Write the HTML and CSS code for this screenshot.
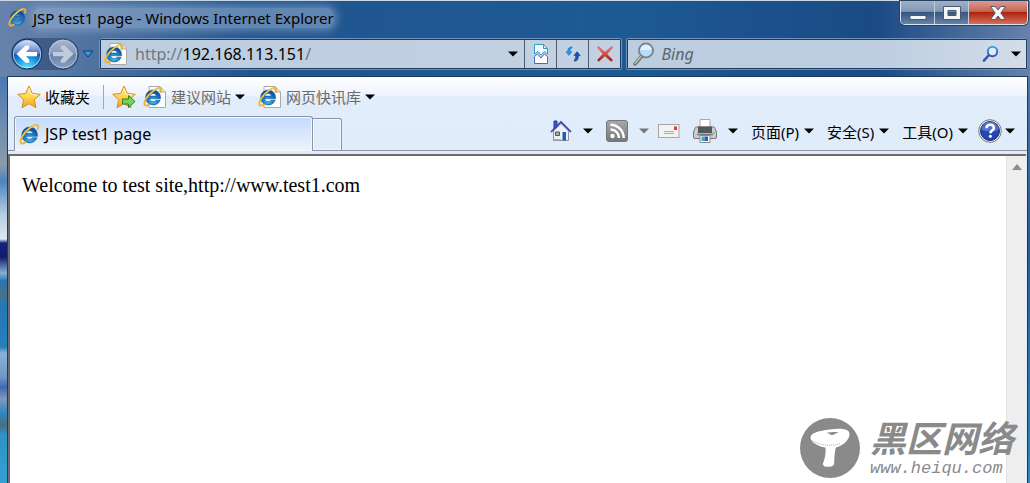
FILE: index.html
```html
<!DOCTYPE html>
<html lang="zh-CN">
<head>
  <meta charset="UTF-8" />
  <title>JSP test1 page - Windows Internet Explorer</title>
  <meta name="viewport" content="width=device-width, initial-scale=1.0">
  <link rel="stylesheet" href="styles.css">
</head>
<body>

<!-- Shared icons -->
<svg class="defs" aria-hidden="true">
  <defs>
    <radialGradient id="ie-blue" cx="50%" cy="75%" r="70%">
      <stop offset="0" stop-color="#4cc4f4"/><stop offset="0.5" stop-color="#1b7cc8"/><stop offset="1" stop-color="#0b4a94"/>
    </radialGradient>
    <linearGradient id="gold" x1="0" y1="0" x2="0" y2="1">
      <stop offset="0" stop-color="#fff3a0"/><stop offset="0.5" stop-color="#ffd44e"/><stop offset="1" stop-color="#f0a022"/>
    </linearGradient>
    <linearGradient id="lens" x1="0" y1="0" x2="0" y2="1">
      <stop offset="0" stop-color="#3aa4d8"/><stop offset="1" stop-color="#3a4fae"/>
    </linearGradient>
    <linearGradient id="red" x1="0" y1="0" x2="0" y2="1">
      <stop offset="0" stop-color="#f08078"/><stop offset="0.5" stop-color="#d84a48"/><stop offset="1" stop-color="#8a1010"/>
    </linearGradient>
    <linearGradient id="grey" x1="0" y1="0" x2="0" y2="1">
      <stop offset="0" stop-color="#a8a8a8"/><stop offset="1" stop-color="#777"/>
    </linearGradient>
    <radialGradient id="back-fill" cx="50%" cy="100%" r="75%">
      <stop offset="0" stop-color="#5ff2ff"/><stop offset="0.5" stop-color="#209ae0"/><stop offset="1" stop-color="#0b3488"/>
    </radialGradient>
    <linearGradient id="gloss" x1="0" y1="0" x2="0" y2="1">
      <stop offset="0" stop-color="#d4e2fa"/><stop offset="1" stop-color="#4468bc"/>
    </linearGradient>
    <linearGradient id="forward-fill" x1="0" y1="0" x2="0" y2="1">
      <stop offset="0" stop-color="#aab8d0"/><stop offset="0.5" stop-color="#8497b8"/><stop offset="0.52" stop-color="#6a80a8"/><stop offset="1" stop-color="#8ba0c2"/>
    </linearGradient>
  </defs>
  <symbol id="ie" viewBox="0 0 22 22">
    <path d="M11.200 3.200a8.300 8.300 0 1 0 7.700 11.300h-4.800c-.7 1-1.700 1.500-3 1.500-2.100 0-3.500-1.200-3.700-3.100h11.900c.4-5.700-3.100-9.700-8.100-9.700zm-3.700 6.800c.4-1.800 1.700-2.900 3.600-2.900s3.200 1.100 3.600 2.900z" fill="url(#ie-blue)" stroke="#0d4f98" stroke-width=".6"/>
    <path d="M19.500 5.500c1-2.400.8-4-.6-4.300-3.500-.8-11 4.600-15 11-2.300 3.700-3.100 7-1.500 8 .9.600 2.500.1 4.300-1" fill="none" stroke="#eeb526" stroke-width="2" stroke-linecap="round"/>
    <path d="M17.500 1.600C13 2.600 7.500 7 4.500 11.600" fill="none" stroke="#ffe88a" stroke-width=".7"/>
  </symbol>
  <symbol id="ie-page" viewBox="0 0 24 24">
    <path d="M6 1.500h11l5.500 5.500v15.500H6z" fill="#fdfdfd" stroke="#a9a9a9"/>
    <path d="M17 1.500V7h5.500" fill="#e6e6e6" stroke="#a9a9a9"/>
    <use href="#ie" x="0" y="2" width="20" height="20"/>
  </symbol>
  <symbol id="star" viewBox="0 0 24 24">
    <path d="M12 1l3.300 7.400 8 .9-6 5.400 1.700 8L12 18.700 5 22.700l1.700-8-6-5.400 8-.9z" fill="url(#gold)" stroke="#d68f22" stroke-linejoin="round"/>
    <path d="M12 3.500l2.300 5.800 5.500.7" fill="none" stroke="#fff9d0"/>
  </symbol>
  <symbol id="caret" viewBox="0 0 10 6"><path d="M0 .5h10L5 5.500z" fill="currentColor"/></symbol>
</svg>

<div class="window">

  <header class="titlebar">
    <svg class="icon-title"><use href="#ie"/></svg>
    <h1 class="title"><span>JSP test1 page - Windows Internet Explorer</span></h1>
    <div class="window-buttons">
      <button class="win-btn win-min" aria-label="最小化">
        <svg width="18" height="16" viewBox="0 0 18 16"><path d="M1 10.500h16v4H1z" fill="#f4f4f4" stroke="#4d5870"/></svg>
      </button>
      <button class="win-btn win-max" aria-label="最大化">
        <svg width="18" height="16" viewBox="0 0 18 16"><path d="M.5 1.500h17v13H.5z M5 5.500v5h8v-5z" fill="#f4f4f4" fill-rule="evenodd" stroke="#4d5870"/></svg>
      </button>
      <button class="win-btn win-close" aria-label="关闭">
        <svg width="18" height="16" viewBox="0 0 18 16"><path d="M1.500 1.500h4.700L9 5l2.800-3.500h4.700L11.800 8l4.700 6.500h-4.700L9 11l-2.800 3.500H1.500L6.200 8z" fill="#f6f6f6" stroke="#555d70"/></svg>
      </button>
    </div>
  </header>

  <div class="navbar">
    <div class="orbs">
      <button class="orb" aria-label="后退">
        <svg width="32" height="32" viewBox="0 0 32 32">
          <circle cx="16" cy="16" r="15" fill="url(#back-fill)" stroke="#16305c"/>
          <path d="M2.500 16a13.500 13.500 0 0 1 27 0q-13.500 3-27 0z" fill="url(#gloss)"/>
          <circle cx="16" cy="16" r="13.800" fill="none" stroke="#d6e6f8" stroke-opacity=".8"/>
          <path d="M5.500 16l9-8.500h3.700v3L15 14h11v4.200H15l3.200 3.500v3h-3.700z" fill="#fff"/>
        </svg>
      </button>
      <button class="orb" aria-label="前进">
        <svg width="32" height="32" viewBox="0 0 32 32">
          <circle cx="16" cy="16" r="15" fill="url(#forward-fill)" stroke="#2d4878"/>
          <circle cx="16" cy="16" r="13.800" fill="none" stroke="#c3d0e4" stroke-opacity=".8"/>
          <path d="M26.500 16l-9-8.500h-3.700v3L17 14H6v4.200h11l-3.200 3.500v3h3.700z" fill="#c0cbdd"/>
        </svg>
      </button>
    </div>
    <button class="history" aria-label="最近浏览的页面">
      <svg width="12" height="8" viewBox="0 0 12 8"><path d="M1 1h10L6 7z" fill="#2f9bd8" stroke="#12386c"/></svg>
    </button>
    <form class="box address">
      <svg class="icon-page"><use href="#ie-page"/></svg>
      <div class="url" role="textbox" aria-label="地址" contenteditable="true" spellcheck="false"><span>http://</span>192.168.113.151<span>/</span></div>
      <button type="button" class="box-caret" aria-label="显示地址"><svg class="caret"><use href="#caret"/></svg></button>
      <button type="button" class="box-btn" aria-label="兼容性视图">
        <svg width="18" height="22" viewBox="0 0 18 22">
          <path d="M2.500 11V1.500h9l4 4V11l-3-2.500-3.500 3.500L6 8.500z" fill="#f4fbff" stroke="#2c9bc8"/>
          <path d="M11.500 1.500v4h4" fill="none" stroke="#2c9bc8"/>
          <path d="M2.500 13.500L5.500 11 9 15l3.500-4 3 2.500v7h-13z" fill="#fff" stroke="#3a72c0"/>
        </svg>
      </button>
      <button type="button" class="box-btn" aria-label="刷新">
        <svg width="18" height="18" viewBox="0 0 18 18">
          <path d="M9 1C5 1 2.800 3 2.800 6H.3l4.700 5.500L9.500 6H7c0-1.500.7-2.500 2-3z" fill="#2f8fd8" stroke="#fff" stroke-width=".5"/>
          <path d="M9.500 17c3.500 0 5.700-2 5.700-5.800h2.500L13 5.700l-4.500 5.500H11c0 1.800-.5 3-1.500 3.800z" fill="#1a55a4" stroke="#fff" stroke-width=".5"/>
        </svg>
      </button>
      <button type="button" class="box-btn" aria-label="停止">
        <svg width="18" height="18" viewBox="0 0 18 18"><path d="M1.500 2.500l1-1L9 7.200l6.500-5.700 1.200 1L11 9l5.700 6-1.500 1.500L9 11l-6.300 5.500L1.300 15 7 9z" fill="url(#red)" stroke="#c84444" stroke-width=".5"/></svg>
      </button>
    </form>
    <form class="box search">
      <svg class="bing-icon" width="22" height="24" viewBox="0 0 22 24">
        <path d="M8.500 14.500L2 22" stroke="#777" stroke-width="3.500" stroke-linecap="round"/>
        <path d="M8 14.500L2 21.300" stroke="#c8c8c8" stroke-width="1.200" stroke-linecap="round"/>
        <circle cx="13" cy="8.500" r="7" fill="#b6dcf8" stroke="#7b828c" stroke-width="1.800"/>
        <path d="M7.500 8a5.500 5.500 0 0 1 11 0z" fill="#e2f2fd"/>
      </svg>
      <input class="search-input" type="text" placeholder="Bing" aria-label="搜索">
      <button type="button" class="go" aria-label="开始搜索">
        <svg width="18" height="18" viewBox="0 0 18 18">
          <path d="M7 10L2 15.500" stroke="#3a4fae" stroke-width="2.600" stroke-linecap="round"/>
          <circle cx="10.500" cy="6.500" r="4.700" fill="#e0ecf8" stroke="url(#lens)" stroke-width="2"/>
        </svg>
      </button>
      <button type="button" class="go-caret" aria-label="搜索选项"><svg class="caret"><use href="#caret"/></svg></button>
    </form>
  </div>

  <div class="client">
    <nav class="favorites">
      <button class="fav fav-main"><svg class="icon-page"><use href="#star"/></svg>收藏夹</button>
      <button class="fav-add" aria-label="添加到收藏夹栏">
        <svg width="24" height="24" viewBox="0 0 24 24">
          <use href="#star" width="24" height="24"/>
          <path d="M10.500 14h6v-3.500l6.500 6-6.500 6V19h-6z" fill="#79d35c" stroke="#268326"/>
        </svg>
      </button>
      <button class="fav fav-link"><svg class="icon-page"><use href="#ie-page"/></svg>建议网站<svg class="caret"><use href="#caret"/></svg></button>
      <button class="fav fav-link"><svg class="icon-page"><use href="#ie-page"/></svg>网页快讯库<svg class="caret"><use href="#caret"/></svg></button>
    </nav>

    <div class="tabrow">
      <button class="tab"><svg class="icon-tab"><use href="#ie"/></svg>JSP test1 page</button>
      <button class="tab-new" aria-label="新选项卡"></button>
      <div class="commands">
        <button class="cmd cmd-icon" aria-label="主页">
          <svg width="22" height="22" viewBox="0 0 22 22">
            <path d="M4 1h3v6L4 9z" fill="#4a58c8" stroke="#2632a0"/>
            <path d="M3.500 11L11 3.500l7.500 7.500v9.500h-15z" fill="#eef0f6" stroke="#8b94a8"/>
            <path d="M1 12L11 2l10 10" fill="none" stroke="#3440b4" stroke-width="1.700"/>
            <path d="M5.500 12h4v3.500h-4z" fill="#aaa" stroke="#555"/>
            <path d="M12.500 12h3.500v8.500h-3.500z" fill="#225eaa"/>
            <path d="M3 20h8" stroke="#8ea0a8" stroke-width="1.500"/>
          </svg>
          <svg class="caret"><use href="#caret"/></svg>
        </button>
        <button class="cmd cmd-icon cmd-off" aria-label="源">
          <svg width="22" height="22" viewBox="0 0 22 22">
            <rect x=".5" y=".5" width="21" height="21" rx="2.500" fill="url(#grey)" stroke="#777"/>
            <circle cx="6.500" cy="16" r="2.200" fill="#fff"/>
            <path d="M4.500 9.500a8.500 8.500 0 0 1 8.500 8.500M4.500 4.800A13.200 13.200 0 0 1 17.700 18" fill="none" stroke="#fff" stroke-width="2.500"/>
          </svg>
          <svg class="caret"><use href="#caret"/></svg>
        </button>
        <button class="cmd cmd-mail" aria-label="阅读邮件">
          <svg width="22" height="16" viewBox="0 0 22 16">
            <rect x=".5" y="1.500" width="20.500" height="13" fill="#f3f3f3" stroke="#a6a6a6"/>
            <path d="M6 8.500h10M6 10.500h10" stroke="#aaa"/>
            <path d="M16 3.500h3v3.500h-3z" fill="#e0383a"/>
          </svg>
        </button>
        <button class="cmd cmd-icon" aria-label="打印">
          <svg width="24" height="24" viewBox="0 0 24 24">
            <path d="M7 .5h10V9H7z" fill="#fff" stroke="#aaa"/>
            <path d="M2 9.500q0-1.500 1.500-1.500h17q1.500 0 1.500 1.500L23.500 13v5q0 1.500-1.500 1.500H2Q.5 19.500.5 18v-5z" fill="#c9ccd0" stroke="#777"/>
            <path d="M5 7.500h14v6.500H5z" fill="#54575c"/>
            <path d="M4 15.500h16" stroke="#777" stroke-width="1.500"/>
            <path d="M20 13h2v1.500h-2z" fill="#5dd05d"/>
            <path d="M7 16.500h10v7H7z" fill="#fff" stroke="#888"/>
            <path d="M8.500 17.500h3V22h-3z" fill="#28b0c0"/>
            <path d="M11.500 17.500h3.500V22h-3.500z" fill="#2860b4"/>
          </svg>
          <svg class="caret"><use href="#caret"/></svg>
        </button>
        <button class="cmd">页面(P)<svg class="caret"><use href="#caret"/></svg></button>
        <button class="cmd">安全(S)<svg class="caret"><use href="#caret"/></svg></button>
        <button class="cmd">工具(O)<svg class="caret"><use href="#caret"/></svg></button>
        <button class="cmd cmd-help" aria-label="帮助">
          <svg width="24" height="24" viewBox="0 0 24 24">
            <circle cx="12" cy="12" r="11.300" fill="#f4f4f4" stroke="#777"/>
            <circle cx="12" cy="12" r="9.500" fill="#2446b0" stroke="#1c2c78"/>
            <path d="M3.500 11a8.500 8.500 0 0 1 17 0q-8.500 3-17 0z" fill="#6484d8" fill-opacity=".7"/>
            <path d="M8.500 9.300C8.500 7 10 5.700 12.200 5.700s3.700 1.300 3.700 3.200c0 2.600-3.500 2.700-3.500 5.300" fill="none" stroke="#fff" stroke-width="2.500"/>
            <circle cx="12.400" cy="17.300" r="1.500" fill="#fff"/>
          </svg>
          <svg class="caret"><use href="#caret"/></svg>
        </button>
      </div>
    </div>

    <div class="viewport">
      <main class="page">
        <p>Welcome to test site,http://www.test1.com</p>
      </main>
      <div class="scrollbar">
        <svg width="10" height="6" viewBox="0 0 10 6"><path d="M0 6h10L5 0z" fill="#8c8c8c"/></svg>
      </div>
    </div>
  </div>

  <!-- Site watermark, bottom right -->
  <div class="watermark">
    <svg width="60" height="60" viewBox="0 0 60 60">
      <circle cx="30" cy="30" r="30" fill="#8a8a8a"/>
      <path d="M25 27c1.500 7 0 13-2 18.500-.6 2.500 2.500 3.500 6 3.300 3.500-.2 5-1.200 5.200-3.500.2-6 .2-11 2.300-18.300z" fill="#fff"/>
      <path d="M10.500 19.500c0-5 9-6.500 19-8 11-1.500 20-1 20 4.500 0 6.500-8.500 14-18 14-11 0-21-5-21-10.500z" fill="#fff"/>
      <path d="M12 22.500c7 4.500 19 6.500 28 3" fill="none" stroke="#aaa" stroke-dasharray="1 1"/>
      <path d="M26 15c4-.8 8-1.500 12.500-.7-2.500.7-4 2.700-6.500 2.700-1.700 0-1.700-1.500-6-2z" fill="#8a8a8a"/>
    </svg>
    <div class="watermark-text">
      <div class="watermark-name">黑区网络</div>
      <div class="watermark-url">www.heiqu.com</div>
    </div>
  </div>

</div>

</body>
</html>
```
FILE: styles.css
```css
* {
  box-sizing: border-box;
}

body {
  margin: 0;
  font-family: "Noto Sans", "Noto Sans CJK SC", sans-serif;
  font-size: 15px;
  color: #000;
}

button {
  display: flex;
  align-items: center;
  justify-content: center;
  margin: 0;
  padding: 0;
  border: none;
  background: none;
  font: inherit;
  color: inherit;
}

svg {
  display: block;
  flex: none;
}

.defs {
  position: absolute;
  width: 0;
  height: 0;
}

.caret {
  width: 10px;
  height: 6px;
}

.icon-title {
  width: 19px;
  height: 19px;
}

.icon-tab {
  width: 21px;
  height: 21px;
}

.icon-page {
  width: 24px;
  height: 24px;
}

/* Window frame */
.window {
  position: relative;
  display: flex;
  flex-direction: column;
  height: 100vh;
  padding: 0 2px 0 7px;
  border-top: 1px solid #cbd9e4;
  background:
    linear-gradient(to bottom, transparent 76px, #4b79b4 76px, #8a9cab 164px, #4c83bd 180px, #b6d0e4 214px, #dde8f2 238px, #14237c 242px, #101c66 256px, #86b0d8 272px, #2576b4 280px, #4a708c 294px, #2478b4 304px, #267fbc 346px, #89b2d8 352px, #7296c4 376px, #3e69b0 386px, #8098bc 398px, #2c8ac0 412px, #4d6d82 424px, #2d93c6 434px, #35a0d4 100%) left / 7px 100% no-repeat,
    linear-gradient(to bottom, transparent 76px, #4f78a8 76px, #2b5c94 50%, #2d8abf 100%) right / 2px 100% no-repeat,
    linear-gradient(to right, #6883ab 0, #22558f 250px, #1d5a94 60%, #1b4a84 85%, #6582aa 100%);
}

/* Title bar */
.titlebar {
  display: flex;
  align-items: center;
  gap: 6px;
  height: 33px;
  padding-left: 1px;
}

.title {
  flex: 1;
  margin: 0;
  font-size: 15px;
  font-weight: 400;
}

.title span {
  border-radius: 8px;
  background: rgba(160, 184, 216, 0.5);
  box-shadow: 0 0 8px 3px rgba(160, 184, 216, 0.5);
}

.window-buttons {
  display: flex;
  align-self: flex-start;
  height: 24px;
  border: 1px solid #dbe4ee;
  border-top: none;
  border-radius: 0 0 5px 5px;
  box-shadow: 0 0 0 1px #29405f;
  overflow: hidden;
}

.win-btn {
  width: 34px;
  border-right: 1px solid #c3cedc;
  background: linear-gradient(to bottom, #9db0c8 0, #8298b6 45%, #38567f 50%, #6483aa 100%);
}

.win-close {
  width: 58px;
  border-right: none;
  background: linear-gradient(to bottom, #dc9a90 0, #c96453 45%, #ae2410 50%, #d5705c 100%);
}

/* Navigation bar */
.navbar {
  display: flex;
  align-items: flex-start;
  height: 42px;
  padding-top: 4px;
}

.orbs {
  display: flex;
  gap: 4px;
  margin-left: 4px;
  border-radius: 17px;
  background: rgba(20, 48, 92, 0.4);
}

.history {
  width: 18px;
  height: 32px;
  margin-right: 2px;
}

.box {
  display: flex;
  align-items: center;
  height: 32px;
  border: 2px solid #1d3a60;
  outline: 1px solid #6f92bc;
  outline-offset: -1px;
  border-radius: 2px;
  background: linear-gradient(to right, #bccde0, #c3d1e2);
}

.address {
  flex: 525;
  padding-left: 3px;
  margin-right: 4px;
}

.url {
  flex: 1;
  padding-left: 7px;
  font-size: 16px;
  line-height: 24px;
  white-space: nowrap;
}

.url span {
  color: #71777f;
}

.box-caret {
  width: 23px;
  height: 100%;
}

.box-btn {
  width: 32px;
  height: 100%;
  border-left: 1px solid #4b5a6c;
}

.search {
  flex: 399;
  padding-left: 5px;
  background: linear-gradient(to right, #bccde0 60%, #d4dce9);
}

.search-input {
  flex: 1;
  min-width: 0;
  padding: 0 6px;
  border: none;
  outline: none;
  background: none;
  font: inherit;
  font-size: 16px;
}

.search-input::placeholder {
  color: #5d646e;
  font-style: italic;
}

.go-caret {
  width: 20px;
  margin-left: 6px;
}

/* Toolbars */
.client {
  flex: 1;
  display: flex;
  flex-direction: column;
  min-height: 0;
  border: 1px solid #1b3a5e;
  border-bottom: none;
  background: linear-gradient(to bottom, #fff 0, #eef4fc 18px, #e1edfa 20px, #e0ecf9 70px);
}

.favorites {
  display: flex;
  align-items: center;
  height: 39px;
  padding-left: 9px;
}

.fav {
  gap: 4px;
}

.fav-main {
  padding-right: 13px;
  border-right: 1px solid #9ca6b4;
}

.fav-add {
  margin: 0 7px 0 8px;
}

.fav-link {
  margin-right: 13px;
  color: #6b6b6b;
}

.fav-link .caret {
  color: #000;
}

.tabrow {
  display: flex;
  align-items: flex-end;
  height: 35px;
  padding-left: 6px;
  border-bottom: 1px solid #8b93a8;
}

.tab {
  justify-content: flex-start;
  gap: 5px;
  flex: 0 1 299px;
  height: 35px;
  padding-left: 4px;
  border: 1px solid #8b93a8;
  border-bottom: none;
  border-radius: 3px 3px 0 0;
  box-shadow: inset 0 0 0 1px #f4f8fe;
  background: linear-gradient(to bottom, #c2dafa, #f0f4fb);
  margin-bottom: -1px;
  font-size: 16px;
}

.tab-new {
  width: 29px;
  height: 32px;
  border: 1px solid #8b93a8;
  border-left: none;
  border-bottom: none;
  border-radius: 0 3px 0 0;
  box-shadow: inset 0 0 0 1px #f4f8fe;
}

.commands {
  flex: 1;
  display: flex;
  align-items: center;
  justify-content: flex-end;
  gap: 13px;
  height: 34px;
  padding: 0 12px 4px 0;
}

.cmd {
  gap: 5px;
  white-space: nowrap;
}

.cmd-icon {
  gap: 11px;
}

.cmd-off .caret {
  color: #777;
}

.cmd-mail {
  margin-left: -4px;
}

.cmd-help {
  gap: 3px;
  margin-left: -3px;
}

/* Page area */
.viewport {
  flex: 1;
  display: flex;
  margin: 3px 1px 0 0;
  border: 2px solid #6d6d6d;
  border-right: none;
  border-bottom: none;
  background: #fff;
}

.page {
  flex: 1;
  padding: 18px 12px;
  font-family: "Liberation Serif", serif;
  font-size: 20px;
}

.page p {
  margin: 0;
}

.scrollbar {
  display: flex;
  justify-content: center;
  width: 20px;
  padding-top: 8px;
  border-left: 1px solid #e4e4e4;
  background: #eee;
}

/* Watermark */
.watermark {
  position: absolute;
  right: 16px;
  bottom: 5px;
  display: flex;
  align-items: center;
  gap: 10px;
  color: #8a8a8a;
}

.watermark-name {
  font-family: "Noto Sans CJK SC", sans-serif;
  font-size: 36px;
  font-style: italic;
  font-weight: 700;
  line-height: 36px;
  padding-bottom: 6px;
}

.watermark-url {
  font-family: "Liberation Mono", monospace;
  font-size: 17px;
  font-style: italic;
  line-height: 18px;
}
```
